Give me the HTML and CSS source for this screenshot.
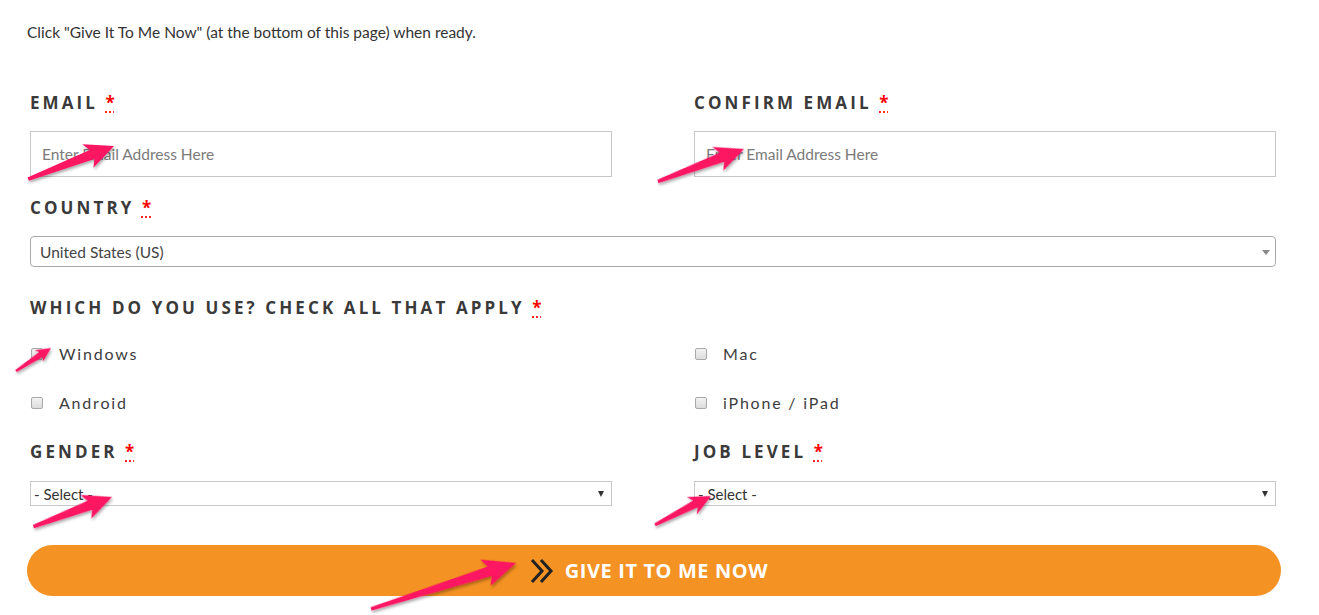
FILE: index.html
```html
<!DOCTYPE html>
<html lang="en">
<head>
<meta charset="UTF-8">
<meta name="viewport" content="width=device-width, initial-scale=1.0">
<title>Give It To Me Now</title>
<link rel="stylesheet" href="styles.css">
</head>
<body>

<div class="page">
    <p class="intro">Click "Give It To Me Now" (at the bottom of this page) when ready.</p>

    <form class="signup">
        <div class="fields">
            <div class="row two">
                <div class="field">
                    <label class="label" for="email">Email <abbr title="required">*</abbr></label>
                    <input class="text" type="email" id="email" placeholder="Enter Email Address Here">
                </div>
                <div class="field">
                    <label class="label" for="email2">Confirm Email <abbr title="required">*</abbr></label>
                    <input class="text" type="email" id="email2" placeholder="Enter Email Address Here">
                </div>
            </div>

            <div class="field country">
                <label class="label" for="country">Country <abbr title="required">*</abbr></label>
                <div class="select-wrap soft">
                    <select id="country" class="pick rounded">
                        <option>United States (US)</option>
                    </select>
                </div>
            </div>

            <div class="field devices">
                <span class="label">Which do you use? Check all that apply <abbr title="required">*</abbr></span>
                <div class="checks">
                    <label class="check"><input type="checkbox"> Windows</label>
                    <label class="check"><input type="checkbox"> Mac</label>
                    <label class="check"><input type="checkbox"> Android</label>
                    <label class="check"><input type="checkbox"> iPhone / iPad</label>
                </div>
            </div>

            <div class="row two small-gap">
                <div class="field">
                    <label class="label" for="gender">Gender <abbr title="required">*</abbr></label>
                    <div class="select-wrap hard">
                        <select id="gender" class="pick square">
                            <option>- Select -</option>
                        </select>
                    </div>
                </div>
                <div class="field">
                    <label class="label" for="job">Job Level <abbr title="required">*</abbr></label>
                    <div class="select-wrap hard">
                        <select id="job" class="pick square">
                            <option>- Select -</option>
                        </select>
                    </div>
                </div>
            </div>
        </div>

        <button type="submit" class="go">
            <svg class="chev" width="26" height="26" viewBox="0 0 26 26">
                <polyline points="3,2 13,13 3,24" />
                <polyline points="12,2 22,13 12,24" />
            </svg>
            Give It To Me Now
        </button>
    </form>

    <!-- setas de destaque por cima do formulario -->
    <svg class="arrows" width="1319" height="615" viewBox="0 0 1319 615">
        <defs>
            <filter id="sh" x="-20%" y="-50%" width="140%" height="200%">
                <feDropShadow dx="1" dy="2" stdDeviation="1.5" flood-color="#000" flood-opacity="0.35"/>
            </filter>
        </defs>
        <g fill="#fd1262" filter="url(#sh)">
            <g transform="translate(114,146) rotate(-21)"><polygon points="-92,-1.5 -24,-5 -29,-13 0,0 -27,13 -23,5 -92,2"/></g>
            <g transform="translate(744,149) rotate(-20.5)"><polygon points="-92,-1.5 -24,-5 -29,-13 0,0 -27,13 -23,5 -92,2"/></g>
            <g transform="translate(51,348) rotate(-33)"><polygon points="-42,-1 -12,-3 -15,-7 0,0 -14,7 -12,3 -42,1.5"/></g>
            <g transform="translate(112,497) rotate(-20.5)"><polygon points="-84,-1.5 -24,-5 -29,-13 0,0 -27,13 -23,5 -84,2"/></g>
            <g transform="translate(711,496) rotate(-27)"><polygon points="-63,-1.2 -18,-4 -22,-10 0,0 -21,10 -17,4 -63,1.8"/></g>
            <g transform="translate(516,563) rotate(-17.5)"><polygon points="-152,-1.5 -28,-5 -33,-14 0,0 -31,14 -27,5 -152,2"/></g>
        </g>
    </svg>
</div>

</body>
</html>
```

FILE: styles.css
```css
body {
    margin: 0;
    padding: 0;
    background-color: #fff;
    font-family: Lato, "Open Sans", sans-serif;
    color: #3d3d3d;
}
.page {
    position: relative;
    width: 1254px;
    height: 615px;
    box-sizing: content-box;
    padding: 22px 0 0 27px;
    overflow: visible;
}
.intro {
    margin: 0;
    font-size: 15.5px;
    line-height: 20px;
    color: #333;
}
.signup {
    margin-top: 49px;
}
.fields {
    margin: 0 5px 0 3px;
}
.row.two {
    display: grid;
    grid-template-columns: 1fr 1fr;
    column-gap: 82px;
}
.field {
    display: flex;
    flex-direction: column;
}
.label {
    display: block;
    font-family: "Open Sans", sans-serif;
    font-weight: 700;
    font-size: 17px;
    line-height: 24px;
    letter-spacing: 3.1px;
    text-transform: uppercase;
    color: #3a3a3a;
    margin-bottom: 16px;
}
.label abbr {
    color: #ff0000;
    text-decoration: underline dotted #ff0000;
    text-underline-offset: 3px;
    letter-spacing: 0;
}
.text {
    height: 46px;
    box-sizing: border-box;
    border: 1px solid #c4c8cb;
    border-radius: 0;
    padding: 0 11px;
    font-family: Lato, sans-serif;
    font-size: 15.5px;
    color: #555;
    outline: none;
}
.text::placeholder {
    color: #7b7b7b;
}
.country {
    margin-top: 19px;
}
.select-wrap {
    position: relative;
}
.pick {
    -webkit-appearance: none;
    appearance: none;
    width: 100%;
    box-sizing: border-box;
    background-color: #fff;
    font-family: Lato, sans-serif;
    color: #444;
    outline: none;
}
.pick.rounded {
    height: 31px;
    border: 1px solid #aaa;
    border-radius: 4px;
    padding: 0 9px;
    font-size: 15.5px;
}
.pick.square {
    height: 25px;
    border: 1px solid #c8c8c8;
    border-radius: 0;
    padding: 0 3px;
    font-size: 15px;
    color: #333;
}
.select-wrap::after {
    content: "";
    position: absolute;
    top: 50%;
    pointer-events: none;
}
.select-wrap.soft::after {
    right: 6px;
    margin-top: -2px;
    border-top: 5px solid #888;
    border-left: 4px solid transparent;
    border-right: 4px solid transparent;
}
.select-wrap.hard::after {
    right: 8px;
    margin-top: -3px;
    border-top: 6px solid #333;
    border-left: 3px solid transparent;
    border-right: 3px solid transparent;
}
.devices {
    margin-top: 29px;
}
.devices .label {
    margin-bottom: 22px;
}
.checks {
    display: grid;
    grid-template-columns: 1fr 1fr;
    column-gap: 82px;
    row-gap: 25px;
}
.check {
    display: flex;
    align-items: center;
    gap: 16px;
    font-size: 16px;
    line-height: 24px;
    letter-spacing: 1.8px;
    color: #3d3d3d;
}
.check input {
    -webkit-appearance: none;
    appearance: none;
    width: 12px;
    height: 12px;
    margin: 0 0 0 1px;
    border: 1px solid #a9a9a9;
    border-radius: 2px;
    background: linear-gradient(#f2f2f2, #dcdcdc);
}
.small-gap {
    margin-top: 25px;
}
.small-gap .label {
    margin-bottom: 17px;
}
.go {
    display: flex;
    align-items: center;
    justify-content: center;
    gap: 10px;
    width: 100%;
    height: 51px;
    margin-top: 39px;
    padding: 0 11px 0 0;
    border: none;
    border-radius: 26px;
    background-color: #f49223;
    color: #fff;
    font-family: "Open Sans", sans-serif;
    font-weight: 700;
    font-size: 20px;
    letter-spacing: 0.6px;
    text-transform: uppercase;
    cursor: pointer;
}
.chev polyline {
    fill: none;
    stroke: #222;
    stroke-width: 3;
}
.arrows {
    position: absolute;
    top: 0;
    left: 0;
    pointer-events: none;
}
```
